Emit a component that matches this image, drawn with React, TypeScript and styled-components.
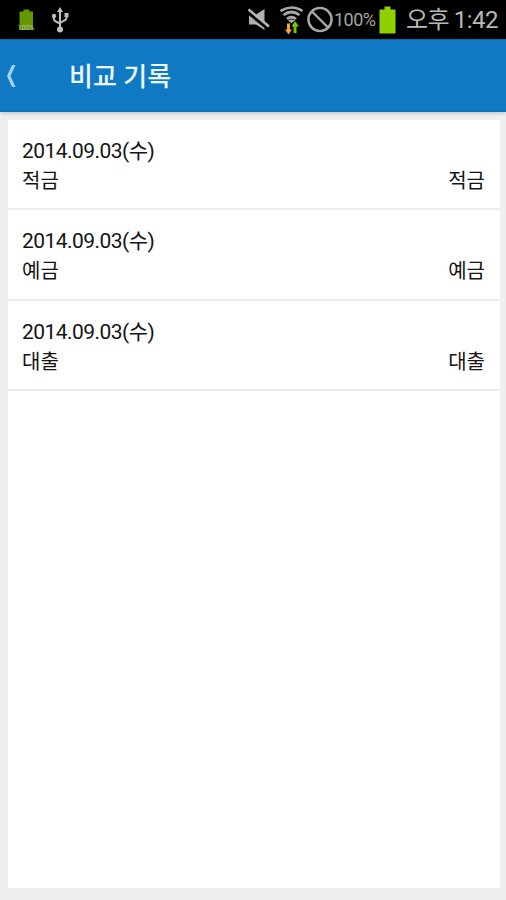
import React from 'react';
import styled, { createGlobalStyle } from 'styled-components';

const GlobalStyle = createGlobalStyle`
  * { box-sizing: border-box; }
  body { margin: 0; background: #efefef; }
`;

const Screen = styled.div`
  display: flex;
  flex-direction: column;
  width: 506px;
  height: 900px;
  overflow: hidden;
  background: #efefef;
  font-family: Roboto, 'Noto Sans CJK KR', sans-serif;
`;

const StatusBar = styled.div`
  display: flex;
  align-items: center;
  flex: none;
  height: 39px;
  padding: 0 8px 0 18px;
  background: #000;
  color: #b9b9b9;
`;

const Icon = styled.svg<{ $gap?: number }>`
  display: block;
  flex: none;
  margin-left: ${(p) => p.$gap ?? 0}px;
`;

const Spacer = styled.div`
  flex: 1;
`;

const Percent = styled.span`
  width: 42px;
  margin-left: 1px;
  font-size: 18px;
  letter-spacing: -0.5px;
  line-height: 40px;
  color: #a5a5a5;
  white-space: nowrap;
`;

const Clock = styled.span`
  display: flex;
  justify-content: space-between;
  width: 92px;
  margin-left: 9px;
  padding-top: 1px;
  font-size: 24px;
  line-height: 38px;
  letter-spacing: -0.5px;
  white-space: nowrap;
`;

const Header = styled.header`
  display: flex;
  align-items: center;
  flex: none;
  height: 73px;
  padding-left: 6px;
  background: #0f79c4;
  border-top: 1px solid #0c67a8;
  border-bottom: 1px solid #0b70b8;
  box-shadow: 0 1px 4px rgba(90, 80, 70, 0.3);
`;

const Title = styled.h1`
  margin: 2px 0 0 51px;
  font-size: 26px;
  font-weight: 500;
  line-height: 70px;
  color: #eef8ff;
`;

const Panel = styled.main`
  flex: none;
  width: 492px;
  height: 768px;
  margin: 8px 0 0 8px;
  background: #fff;
`;

const Row = styled.article`
  height: 90.4px;
  padding: 17px 15px 0 14px;
  border-bottom: 2px solid #ececec;
  font-size: 20px;
  line-height: 29px;
  color: #141414;
`;

const DateText = styled.div`
  height: 30px;
  font-size: 21px;
  letter-spacing: -0.55px;
`;

const Labels = styled.div`
  display: flex;
  justify-content: space-between;
`;

const records = [
  { date: '2014.09.03(수)', name: '적금' },
  { date: '2014.09.03(수)', name: '예금' },
  { date: '2014.09.03(수)', name: '대출' },
];

const SmallBattery = () => (
  <Icon width="18" height="24" viewBox="0 0 18 24">
    <path d="M1.5 3.5h4V1.5h6v2h3.5V22H1.5z" fill="#659800" />
    <text x="8" y="21.5" fontSize="7" textAnchor="middle" fill="#b5bda9">100%</text>
  </Icon>
);

const Usb = () => (
  <Icon $gap={15} width="19" height="26" viewBox="0 0 19 26">
    <g fill="none" stroke="#bdbdbd" strokeWidth="2">
      <path d="M9 4v18M2.8 9v2.5q0 2 2 3L9 16.5M15.5 8v2.5q0 2-2 3L9 16" />
    </g>
    <g fill="#bdbdbd">
      <path d="M9 0l3 5H6z" />
      <circle cx="3" cy="9" r="2.2" />
      <path d="M13.5 6h4v4h-4z" />
      <circle cx="9" cy="22.5" r="3" />
    </g>
  </Icon>
);

const Muted = () => (
  <Icon width="24" height="24" viewBox="0 0 24 24">
    <path d="M1 6.5h7l8.5-5.5v21L8 16.5H1z" fill="#b0b0b0" />
    <path d="M-1 2.6l23 18.8" stroke="#000" strokeWidth="4.8" />
    <path d="M0.5 1.5l20.5 17" stroke="#b8b8b8" strokeWidth="2.5" />
  </Icon>
);

const Wifi = () => (
  <Icon $gap={8} width="26" height="30" viewBox="0 0 26 30">
    <g fill="none" stroke="#a9a9a9" strokeWidth="2.7">
      <path d="M0.5 6q11.5-7 22 0M3.5 10q8-6 16 0M7 14q4.5-3.5 9 0" />
    </g>
    <path d="M8 15.5q3.5-2 7 0L11.5 18z" fill="#b0b0b0" />
    <path d="M7 18.5h3v6h2L8.5 29.5 5 24.5h2z" fill="#f6a13b" />
    <path d="M13.5 28h3v-6.5H19L15 16l-3.5 5.5h2z" fill="#75c500" />
  </Icon>
);

const Blocked = () => (
  <Icon $gap={1} width="26" height="28" viewBox="0 0 26 28">
    <circle cx="13" cy="13.5" r="11.6" fill="none" stroke="#a9a9a9" strokeWidth="2.4" />
    <path d="M5 5.5l16 16" stroke="#a9a9a9" strokeWidth="2.4" />
  </Icon>
);

const Battery = () => (
  <Icon $gap={3} width="18" height="28" viewBox="0 0 18 28">
    <path d="M0.5 3.5h5V0.5h6v3h5v24h-16z" fill="#8ed000" />
  </Icon>
);

const Back = () => (
  <Icon width="12" height="26" viewBox="0 0 12 26">
    <path d="M9.5 2H6L1 13l5 11h3.5L4.5 13z" fill="#a4d3f2" />
  </Icon>
);

export default function App() {
  return (
    <>
      <GlobalStyle />
      <Screen>
        <StatusBar>
          <SmallBattery />
          <Usb />
          <Spacer />
          <Muted />
          <Wifi />
          <Blocked />
          <Percent>100%</Percent>
          <Battery />
          <Clock>
            <span>오후</span>
            <span>1:42</span>
          </Clock>
        </StatusBar>
        <Header>
          <Back />
          <Title>비교 기록</Title>
        </Header>
        <Panel>
          {records.map((record) => (
            <Row key={record.name}>
              <DateText>{record.date}</DateText>
              <Labels>
                <span>{record.name}</span>
                <span>{record.name}</span>
              </Labels>
            </Row>
          ))}
        </Panel>
      </Screen>
    </>
  );
}
